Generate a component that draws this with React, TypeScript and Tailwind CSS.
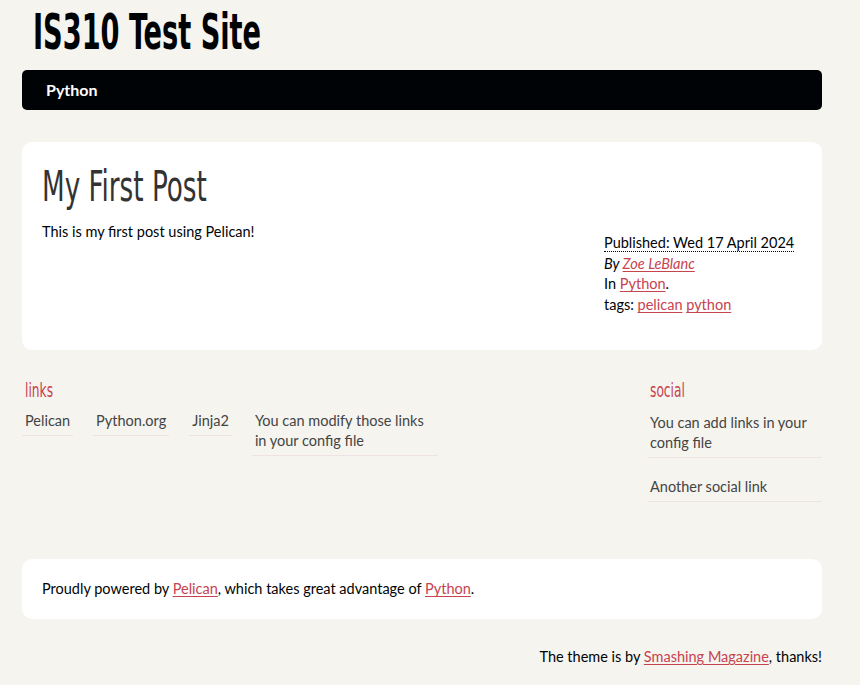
const body = "font-['Lato','Liberation_Sans',sans-serif]";
const head = "font-['Liberation_Sans_Narrow','DejaVu_Sans_Condensed',sans-serif]";

const blogroll = [
  { label: "Pelican", w: "" },
  { label: "Python.org", w: "" },
  { label: "Jinja2", w: "" },
  { label: "You can modify those links in your config file", w: "w-[186px]" },
];

const social = ["You can add links in your config file", "Another social link"];

function Red({ children }: { children: React.ReactNode }) {
  return <a className="text-[#C74350] underline underline-offset-2">{children}</a>;
}

export default function App() {
  return (
    <div className={`min-h-[685px] bg-[#F5F4EF] text-[14.5px] leading-[20px] text-[#000305] ${body}`}>
      <div className="ml-[22px] w-[800px] pt-[7px]">
        <header>
          <h1 className={`${head} pl-[11px] text-[50px] font-bold leading-[50px] text-[#000305]`}>
            <span className="inline-block origin-left scale-x-[0.605]">IS310 Test Site</span>
          </h1>
          <nav className="mt-[13px] flex h-[40px] items-center rounded-[5px] bg-[#000305] pl-[24px]">
            <a className="-mt-[1px] text-[16px] font-bold text-white">Python</a>
          </nav>
        </header>

        <article className="mt-[32px] h-[208px] rounded-[10px] bg-white px-[20px] pt-[24px]">
          <h1 className={`${head} text-[42px] leading-[42px] text-[#333]`}>
            <span className="inline-block origin-left scale-x-[0.695]">My First Post</span>
          </h1>
          <div className="mt-[14px] flex justify-between">
            <p>This is my first post using Pelican!</p>
            <footer className="mt-[11px] w-[198px] leading-[20.7px]">
              <div>
                <abbr className="no-underline border-b border-dotted border-[#000305]">
                  Published: Wed 17 April 2024
                </abbr>
              </div>
              <div className="italic">
                By <Red>Zoe LeBlanc</Red>
              </div>
              <div>
                In <Red>Python</Red>.
              </div>
              <div>
                tags: <Red>pelican</Red> <Red>python</Red>
              </div>
            </footer>
          </div>
        </article>

        <section className="mt-[30px] flex justify-between">
          <div>
            <h2 className={`${head} pl-[3px] text-[20px] leading-[20px] text-[#C74350]`}>
              <span className="inline-block origin-left scale-x-[0.68]">links</span>
            </h2>
            <ul className="mt-[7px] flex items-start gap-[20px]">
              {blogroll.map((b) => (
                <li key={b.label} className={`border-b border-[#efe2e2] ${b.w}`}>
                  <a className="block px-[3px] py-[4px] text-[#444]">{b.label}</a>
                </li>
              ))}
            </ul>
          </div>
          <div className="w-[174px]">
            <h2 className={`${head} pl-[2px] text-[20px] leading-[20px] text-[#C74350]`}>
              <span className="inline-block origin-left scale-x-[0.68]">social</span>
            </h2>
            <ul className="mt-[9px]">
              {social.map((s) => (
                <li key={s} className="mb-[15px] border-b border-[#efe2e2] last:mb-0">
                  <a className="block px-[2px] py-[4px] text-[#444]">{s}</a>
                </li>
              ))}
            </ul>
          </div>
        </section>

        <footer className="mt-[57px] rounded-[10px] bg-white p-[20px]">
          Proudly powered by <Red>Pelican</Red>, which takes great advantage of <Red>Python</Red>.
        </footer>
        <p className="mt-[28px] text-right">
          The theme is by <Red>Smashing Magazine</Red>, thanks!
        </p>
      </div>
    </div>
  );
}
